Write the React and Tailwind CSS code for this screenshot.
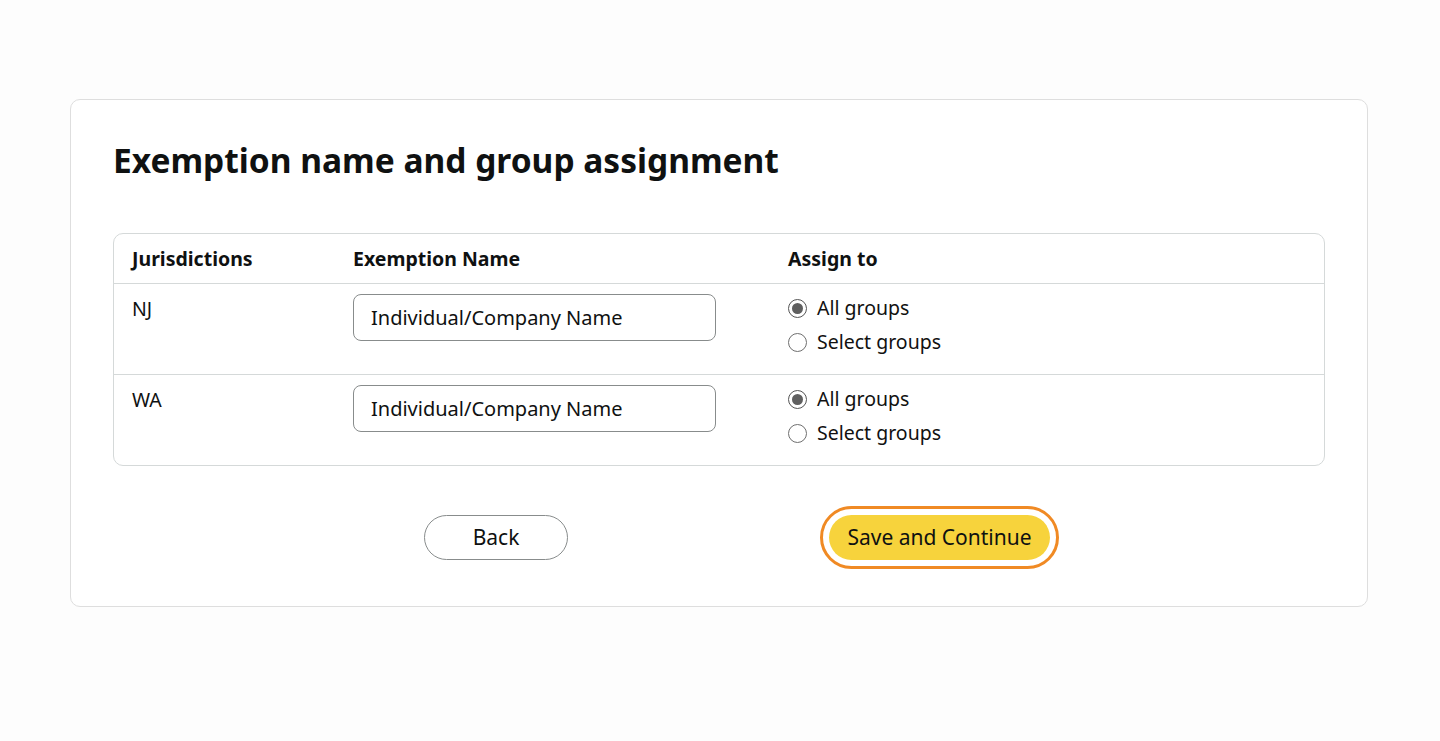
import React from 'react'

const rows = [
  { code: 'NJ', name: 'Individual/Company Name', assign: 'all' },
  { code: 'WA', name: 'Individual/Company Name', assign: 'all' }
]

function Radio({ checked, label }) {
  return (
    <label className="flex items-center h-[34px] gap-[10px]">
      <span
        className={`flex items-center justify-center w-[19px] h-[19px] rounded-full border ${
          checked ? 'border-[#555]' : 'border-[#6f6f6f]'
        } bg-white`}
      >
        {checked && <span className="w-[11px] h-[11px] rounded-full bg-[#5f5f5f]" />}
      </span>
      <span className="text-[19.5px] text-[#111]">{label}</span>
    </label>
  )
}

function App() {
  return (
    <div
      className="min-h-[741px] bg-[#fdfdfd] pt-[99px] px-[70px]"
      style={{ fontFamily: '"Noto Sans", "Open Sans", sans-serif' }}
    >
      <div className="w-[1298px] h-[508px] bg-white border border-[#dedede] rounded-[10px] px-[42px] pt-[38px]">
        {/* Title */}
        <h1 className="text-[33.5px] leading-[44px] font-bold text-[#0f1111]">
          Exemption name and group assignment
        </h1>

        {/* Exemptions table */}
        <div className="mt-[51px] border border-[#d5d9d9] rounded-[10px] text-[#0f1111]">
          <div className="flex items-center h-[50px] border-b border-[#d5d9d9] text-[19.5px] font-bold">
            <div className="w-[239px] pl-[18px]">Jurisdictions</div>
            <div className="w-[435px]">Exemption Name</div>
            <div className="flex-1">Assign to</div>
          </div>
          {rows.map((row, i) => (
            <div
              key={row.code}
              className={`flex items-start ${i < rows.length - 1 ? 'h-[91px] border-b border-[#d5d9d9]' : 'h-[90px]'}`}
            >
              <div className="w-[239px] pl-[18px] pt-[11px] text-[19.5px] leading-[28px]">{row.code}</div>
              <div className="w-[435px] pt-[10px]">
                <div className="w-[363px] h-[47px] flex items-center px-[17px] border border-[#888c8c] rounded-[8px] text-[20px]">
                  {row.name}
                </div>
              </div>
              <div className="flex-1 pt-[7px]">
                <Radio checked={row.assign === 'all'} label="All groups" />
                <Radio checked={row.assign !== 'all'} label="Select groups" />
              </div>
            </div>
          ))}
        </div>

        {/* Actions */}
        <div className="flex items-center mt-[40px] pl-[311px]">
          <button className="w-[144px] h-[45px] rounded-full border border-[#888c8c] bg-white text-[21px] text-[#0f1111]">
            Back
          </button>
          <div className="ml-[252px] p-[6px] rounded-full border-[3px] border-[#f08a24]">
            <button className="w-[221px] h-[45px] rounded-full bg-[#f7d33c] text-[21px] text-[#0f1111]">
              Save and Continue
            </button>
          </div>
        </div>
      </div>
    </div>
  )
}

export default App
